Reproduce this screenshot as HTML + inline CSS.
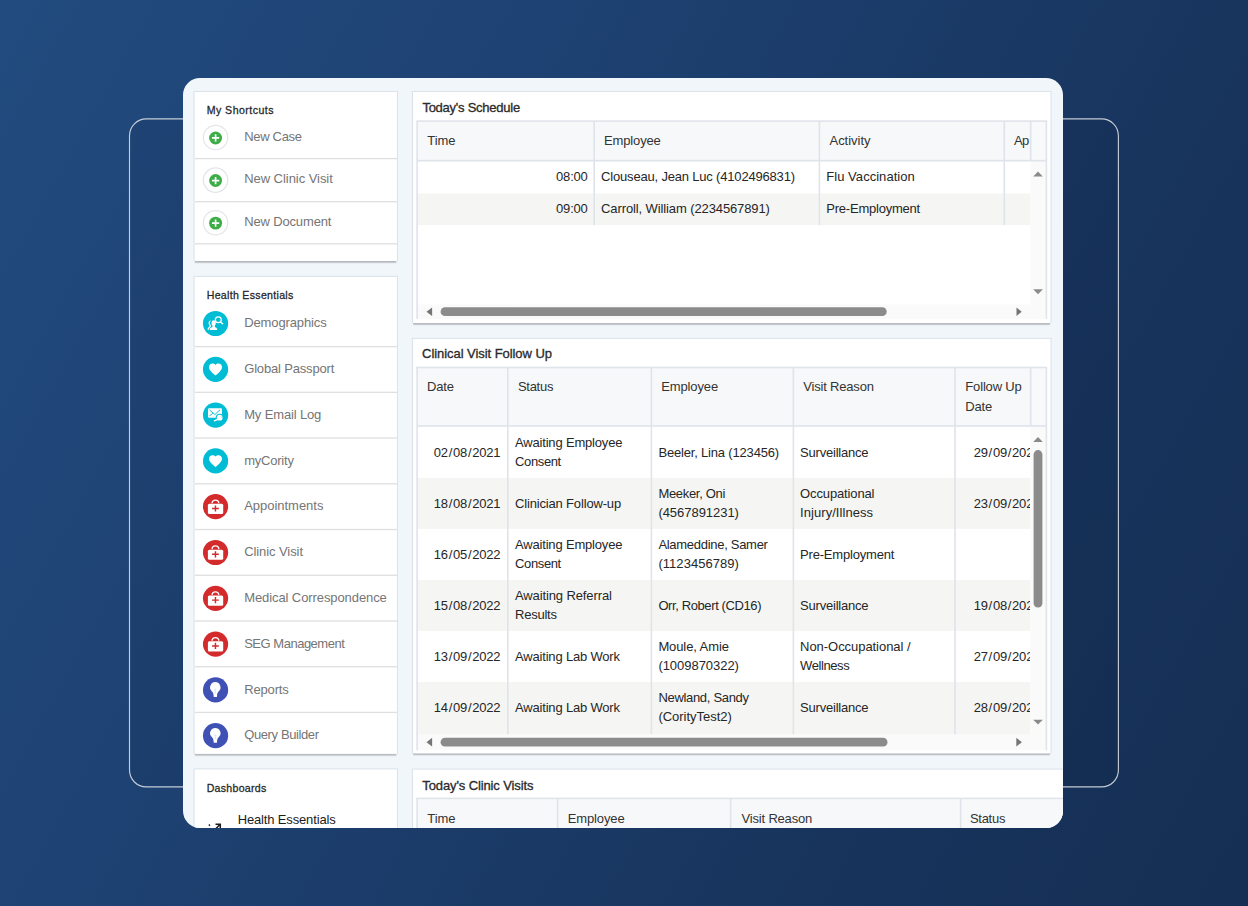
<!DOCTYPE html>
<html lang="en">
<head>
<meta charset="utf-8">
<title>Health Essentials Dashboard</title>
<style>
html,body{margin:0;padding:0}
body{width:1248px;height:906px;overflow:hidden;position:relative;font-family:"Liberation Sans",sans-serif;
 background:linear-gradient(119deg,#224b7f 0%,#1d4070 38%,#18355e 70%,#152e53 100%)}
.outline{position:absolute;left:0;top:0}
.card{position:absolute;left:183px;top:78px;width:880px;height:750px;background:#f1f6fb;border-radius:17px;overflow:hidden}
.x{position:absolute;white-space:pre;line-height:1;font-size:13px;color:#262626}
.h{color:#252525;-webkit-text-stroke:.26px #252525}
.x i{font-style:normal;margin:0 .85px}
.t{color:#2b2b2b;-webkit-text-stroke:.32px #2b2b2b}
.th{color:#333}
.m{color:#757575}
.d{color:#1c1c1c}
.ic{position:absolute;width:28px;height:28px}
.geo{position:absolute;left:0;top:0}
</style>
</head>
<body>
<svg class="outline" width="1248" height="906" viewBox="0 0 1248 906"><rect x="129.5" y="118.9" width="988.9" height="668" rx="16.8" fill="rgba(0,0,24,.06)" stroke="#d3d8e0" stroke-opacity=".92" stroke-width="1.15"/></svg>
<div class="card">

<!-- panels, grids, scrollbars (page coordinates, anti-aliased) -->
<svg class="geo" width="880" height="750" viewBox="183 78 880 750">
<rect x="193.50" y="91.00" width="204.50" height="170.40" fill="rgba(40,60,100,.10)"/>
<rect x="194.80" y="261.00" width="201.50" height="1.80" fill="rgba(0,0,0,.21)"/>
<rect x="194.80" y="262.80" width="201.50" height="0.80" fill="rgba(0,0,0,.05)"/>
<rect x="194.60" y="92.00" width="202.30" height="169.00" fill="#fff"/>
<rect x="193.50" y="275.90" width="204.50" height="478.30" fill="rgba(40,60,100,.10)"/>
<rect x="194.80" y="753.80" width="201.50" height="1.80" fill="rgba(0,0,0,.21)"/>
<rect x="194.80" y="755.60" width="201.50" height="0.80" fill="rgba(0,0,0,.05)"/>
<rect x="194.60" y="276.90" width="202.30" height="476.90" fill="#fff"/>
<rect x="193.50" y="768.40" width="204.50" height="77.00" fill="rgba(40,60,100,.10)"/>
<rect x="194.80" y="845.00" width="201.50" height="1.80" fill="rgba(0,0,0,.21)"/>
<rect x="194.80" y="846.80" width="201.50" height="0.80" fill="rgba(0,0,0,.05)"/>
<rect x="194.60" y="769.40" width="202.30" height="75.60" fill="#fff"/>
<rect x="411.90" y="91.00" width="639.70" height="232.40" fill="rgba(40,60,100,.10)"/>
<rect x="413.20" y="323.00" width="636.70" height="1.80" fill="rgba(0,0,0,.21)"/>
<rect x="413.20" y="324.80" width="636.70" height="0.80" fill="rgba(0,0,0,.05)"/>
<rect x="413.00" y="92.00" width="637.50" height="231.00" fill="#fff"/>
<rect x="411.90" y="337.90" width="639.70" height="415.80" fill="rgba(40,60,100,.10)"/>
<rect x="413.20" y="753.30" width="636.70" height="1.80" fill="rgba(0,0,0,.21)"/>
<rect x="413.20" y="755.10" width="636.70" height="0.80" fill="rgba(0,0,0,.05)"/>
<rect x="413.00" y="338.90" width="637.50" height="414.40" fill="#fff"/>
<rect x="411.90" y="768.60" width="664.20" height="76.80" fill="rgba(40,60,100,.10)"/>
<rect x="413.20" y="845.00" width="661.20" height="1.80" fill="rgba(0,0,0,.21)"/>
<rect x="413.20" y="846.80" width="661.20" height="0.80" fill="rgba(0,0,0,.05)"/>
<rect x="413.00" y="769.60" width="662.00" height="75.40" fill="#fff"/>
<rect x="195.00" y="157.92" width="202.00" height="1.35" fill="#e0e0e0"/>
<rect x="195.00" y="201.02" width="202.00" height="1.35" fill="#e0e0e0"/>
<rect x="195.00" y="243.12" width="202.00" height="1.35" fill="#e0e0e0"/>
<rect x="195.00" y="345.93" width="202.00" height="1.35" fill="#e0e0e0"/>
<rect x="195.00" y="391.66" width="202.00" height="1.35" fill="#e0e0e0"/>
<rect x="195.00" y="437.38" width="202.00" height="1.35" fill="#e0e0e0"/>
<rect x="195.00" y="483.12" width="202.00" height="1.35" fill="#e0e0e0"/>
<rect x="195.00" y="528.85" width="202.00" height="1.35" fill="#e0e0e0"/>
<rect x="195.00" y="574.58" width="202.00" height="1.35" fill="#e0e0e0"/>
<rect x="195.00" y="620.31" width="202.00" height="1.35" fill="#e0e0e0"/>
<rect x="195.00" y="666.04" width="202.00" height="1.35" fill="#e0e0e0"/>
<rect x="195.00" y="711.77" width="202.00" height="1.35" fill="#e0e0e0"/>
<rect x="417.10" y="121.10" width="613.30" height="39.60" fill="#f7f8f9"/>
<rect x="1030.40" y="121.10" width="16.00" height="39.60" fill="#f8f9fa"/>
<rect x="417.10" y="193.40" width="613.30" height="31.70" fill="#f5f5f3"/>
<rect x="1030.40" y="160.70" width="16.00" height="143.80" fill="#fafafa"/>
<rect x="417.10" y="304.50" width="629.30" height="14.40" fill="#fafafa"/>
<rect x="593.40" y="121.10" width="1.60" height="104.00" fill="#dfe3ea"/>
<rect x="818.60" y="121.10" width="1.60" height="104.00" fill="#dfe3ea"/>
<rect x="1003.50" y="121.10" width="1.60" height="104.00" fill="#dfe3ea"/>
<rect x="1029.90" y="121.10" width="1.60" height="39.60" fill="#dfe3ea"/>
<rect x="417.10" y="159.90" width="629.30" height="1.60" fill="#dfe3ea"/>
<rect x="416.30" y="120.30" width="630.90" height="1.60" fill="#dfe3ea"/>
<rect x="416.30" y="121.10" width="1.60" height="197.80" fill="#dfe3ea"/>
<rect x="1045.60" y="121.10" width="1.60" height="197.80" fill="#dfe3ea"/>
<polygon points="1033.20,176.50 1042.80,176.50 1038.00,171.60" fill="#8a8a8a"/>
<polygon points="1033.20,289.30 1042.80,289.30 1038.00,294.20" fill="#8a8a8a"/>
<polygon points="432.10,307.40 432.10,316.00 426.50,311.70" fill="#757575"/>
<polygon points="1016.50,307.40 1016.50,316.00 1021.70,311.70" fill="#757575"/>
<rect x="440.60" y="307.20" width="446.10" height="8.90" rx="4.45" fill="#8b8b8b"/>
<rect x="417.10" y="367.50" width="613.30" height="58.50" fill="#f7f8f9"/>
<rect x="1030.40" y="367.50" width="16.00" height="58.50" fill="#f8f9fa"/>
<rect x="417.10" y="477.85" width="613.30" height="51.05" fill="#f5f5f3"/>
<rect x="417.10" y="579.95" width="613.30" height="51.05" fill="#f5f5f3"/>
<rect x="417.10" y="682.05" width="613.30" height="52.25" fill="#f5f5f3"/>
<rect x="1030.40" y="426.00" width="16.00" height="308.30" fill="#fafafa"/>
<rect x="417.10" y="734.30" width="629.30" height="16.00" fill="#fafafa"/>
<rect x="507.00" y="367.50" width="1.60" height="366.80" fill="#dfe3ea"/>
<rect x="650.60" y="367.50" width="1.60" height="366.80" fill="#dfe3ea"/>
<rect x="792.60" y="367.50" width="1.60" height="366.80" fill="#dfe3ea"/>
<rect x="954.20" y="367.50" width="1.60" height="366.80" fill="#dfe3ea"/>
<rect x="1029.90" y="367.50" width="1.60" height="58.50" fill="#dfe3ea"/>
<rect x="417.10" y="425.20" width="629.30" height="1.60" fill="#dfe3ea"/>
<rect x="416.30" y="366.70" width="630.90" height="1.60" fill="#dfe3ea"/>
<rect x="416.30" y="367.50" width="1.60" height="382.80" fill="#dfe3ea"/>
<rect x="1045.60" y="367.50" width="1.60" height="382.80" fill="#dfe3ea"/>
<polygon points="1033.20,441.90 1042.80,441.90 1038.00,437.00" fill="#8a8a8a"/>
<polygon points="1033.20,719.70 1042.80,719.70 1038.00,724.60" fill="#8a8a8a"/>
<rect x="1033.60" y="450.10" width="8.80" height="157.50" rx="4.4" fill="#8b8b8b"/>
<polygon points="432.10,737.80 432.10,746.60 426.50,742.20" fill="#757575"/>
<polygon points="1016.30,737.80 1016.30,746.60 1021.90,742.20" fill="#757575"/>
<rect x="440.60" y="737.80" width="446.90" height="8.80" rx="4.4" fill="#8b8b8b"/>
<rect x="417.10" y="798.40" width="652.90" height="41.60" fill="#f7f8f9"/>
<rect x="556.80" y="798.40" width="1.60" height="41.60" fill="#dfe3ea"/>
<rect x="729.80" y="798.40" width="1.60" height="41.60" fill="#dfe3ea"/>
<rect x="959.80" y="798.40" width="1.60" height="41.60" fill="#dfe3ea"/>
<rect x="416.30" y="797.60" width="653.70" height="1.60" fill="#dfe3ea"/>
<rect x="416.30" y="798.40" width="1.60" height="41.60" fill="#dfe3ea"/>
</svg>
<!-- follow-up dates: clipped by the column edge -->
<div style="position:absolute;left:772px;top:349px;width:75.4px;height:307px;overflow:hidden">
<span class="x c" style="left:18.70px;top:19.0px;letter-spacing:-0.193px;">29<i>/</i>09<i>/</i>2022</span>
<span class="x c" style="left:18.70px;top:70.0px;letter-spacing:-0.193px;">23<i>/</i>09<i>/</i>2022</span>
<span class="x c" style="left:18.70px;top:172.0px;letter-spacing:-0.193px;">19<i>/</i>08<i>/</i>2022</span>
<span class="x c" style="left:18.70px;top:223.0px;letter-spacing:-0.193px;">27<i>/</i>09<i>/</i>2022</span>
<span class="x c" style="left:18.70px;top:274.0px;letter-spacing:-0.193px;">28<i>/</i>09<i>/</i>2022</span>
</div>

<!-- icons -->
<svg class="ic" style="left:18px;top:45px" width="28" height="28" viewBox="-14.55 -14.50 28 28"><circle r="12.2" fill="#fff" stroke="#e3e5e9" stroke-width="1.25"/><circle cx="0.05" cy="0.45" r="6.45" fill="#3dad48"/><path d="M-3.6 .45H3.7M.05 -3.2V4.1" stroke="#fff" stroke-width="1.7" fill="none"/></svg>
<svg class="ic" style="left:18px;top:88px" width="28" height="28" viewBox="-14.55 -14.10 28 28"><circle r="12.2" fill="#fff" stroke="#e3e5e9" stroke-width="1.25"/><circle cx="0.05" cy="0.45" r="6.45" fill="#3dad48"/><path d="M-3.6 .45H3.7M.05 -3.2V4.1" stroke="#fff" stroke-width="1.7" fill="none"/></svg>
<svg class="ic" style="left:18px;top:130px" width="28" height="28" viewBox="-14.55 -14.70 28 28"><circle r="12.2" fill="#fff" stroke="#e3e5e9" stroke-width="1.25"/><circle cx="0.05" cy="0.45" r="6.45" fill="#3dad48"/><path d="M-3.6 .45H3.7M.05 -3.2V4.1" stroke="#fff" stroke-width="1.7" fill="none"/></svg>
<svg class="ic" style="left:18px;top:231px" width="28" height="28" viewBox="-14.55 -14.50 28 28"><circle r="12.6" fill="#00bcd4"/><circle cx="2.75" cy="-3.75" r="2.95" fill="none" stroke="#fff" stroke-width="1.25"/><path d="M4.95 -1.55L7.1 .35" stroke="#fff" stroke-width="1.4" stroke-linecap="round"/><path d="M-5.3 -2.9C-7.5 -2.4 -7.3 .8 -5.9 2C-6.1 3.4 -7.7 3.7 -8.1 6L-6.9 6.4C-6.6 4.7 -5.1 4.3 -4.6 2.8L-4.8 1.6C-5.9 .4 -6 -1.6 -4.8 -2.8Z" fill="#fff"/><ellipse cx="-1.9" cy="-.55" rx="2.15" ry="2.75" fill="#fff"/><path d="M-5.8 6.45C-5.8 4.6 -4.6 4.1 -3.1 3.5V1.4H-.7V3.5C.8 4.1 1.75 4.6 1.75 6.45Z" fill="#fff"/></svg>
<svg class="ic" style="left:18px;top:277px" width="28" height="28" viewBox="-14.55 -14.30 28 28"><circle r="12.6" fill="#00bcd4"/><path transform="translate(-.05 .25) scale(.655) translate(-12 -12.175)" fill="#fff" d="M12 21.35l-1.45-1.32C5.4 15.36 2 12.28 2 8.5 2 5.42 4.42 3 7.5 3c1.74 0 3.41.81 4.5 2.09C13.09 3.81 14.76 3 16.5 3 19.58 3 22 5.42 22 8.5c0 3.78-3.4 6.86-8.55 11.54L12 21.35z"/></svg>
<svg class="ic" style="left:18px;top:323px" width="28" height="28" viewBox="-14.55 -14.10 28 28"><circle r="12.6" fill="#00bcd4"/><rect x="-7.5" y="-6.9" width="13.9" height="9.5" rx="1" fill="#fff"/><path d="M-5.8 -5L-.6 -.6L4.2 -5M-5.8 .5L-2.8 -1.7" stroke="#00bcd4" stroke-width=".9" fill="none" stroke-linecap="round"/><circle cx="4.1" cy="2.6" r="3.9" fill="#00bcd4"/><path d="M2.2 4.4L-1.4 6.2" stroke="#00bcd4" stroke-width="2.6" stroke-linecap="round"/><circle cx="4.1" cy="2.6" r="2.9" fill="#fff"/><path d="M2.2 4.2L-1.2 5.7" stroke="#fff" stroke-width="1.3" stroke-linecap="round"/><path d="M5.4 1.1A1.9 1.9 0 0 1 6 2.8" stroke="#00bcd4" stroke-width=".5" fill="none" opacity=".6"/></svg>
<svg class="ic" style="left:18px;top:368px" width="28" height="28" viewBox="-14.55 -14.90 28 28"><circle r="12.6" fill="#00bcd4"/><path transform="translate(-.05 .25) scale(.655) translate(-12 -12.175)" fill="#fff" d="M12 21.35l-1.45-1.32C5.4 15.36 2 12.28 2 8.5 2 5.42 4.42 3 7.5 3c1.74 0 3.41.81 4.5 2.09C13.09 3.81 14.76 3 16.5 3 19.58 3 22 5.42 22 8.5c0 3.78-3.4 6.86-8.55 11.54L12 21.35z"/></svg>
<svg class="ic" style="left:18px;top:414px" width="28" height="28" viewBox="-14.55 -14.70 28 28"><circle r="12.6" fill="#d32a2c"/><path d="M-3.5 -3.4C-3.3 -7.6 3.1 -7.6 3.3 -3.4" stroke="#fff" stroke-width="1.25" fill="none"/><rect x="-7.65" y="-2.85" width="15.3" height="10.2" rx="1.5" fill="#fff"/><path d="M-3.5 1.8H3.3M-.1 -1.3V4.9" stroke="#d32a2c" stroke-width="1.45" fill="none"/></svg>
<svg class="ic" style="left:18px;top:460px" width="28" height="28" viewBox="-14.55 -14.50 28 28"><circle r="12.6" fill="#d32a2c"/><path d="M-3.5 -3.4C-3.3 -7.6 3.1 -7.6 3.3 -3.4" stroke="#fff" stroke-width="1.25" fill="none"/><rect x="-7.65" y="-2.85" width="15.3" height="10.2" rx="1.5" fill="#fff"/><path d="M-3.5 1.8H3.3M-.1 -1.3V4.9" stroke="#d32a2c" stroke-width="1.45" fill="none"/></svg>
<svg class="ic" style="left:18px;top:506px" width="28" height="28" viewBox="-14.55 -14.30 28 28"><circle r="12.6" fill="#d32a2c"/><path d="M-3.5 -3.4C-3.3 -7.6 3.1 -7.6 3.3 -3.4" stroke="#fff" stroke-width="1.25" fill="none"/><rect x="-7.65" y="-2.85" width="15.3" height="10.2" rx="1.5" fill="#fff"/><path d="M-3.5 1.8H3.3M-.1 -1.3V4.9" stroke="#d32a2c" stroke-width="1.45" fill="none"/></svg>
<svg class="ic" style="left:18px;top:552px" width="28" height="28" viewBox="-14.55 -14.10 28 28"><circle r="12.6" fill="#d32a2c"/><path d="M-3.5 -3.4C-3.3 -7.6 3.1 -7.6 3.3 -3.4" stroke="#fff" stroke-width="1.25" fill="none"/><rect x="-7.65" y="-2.85" width="15.3" height="10.2" rx="1.5" fill="#fff"/><path d="M-3.5 1.8H3.3M-.1 -1.3V4.9" stroke="#d32a2c" stroke-width="1.45" fill="none"/></svg>
<svg class="ic" style="left:18px;top:597px" width="28" height="28" viewBox="-14.55 -14.90 28 28"><circle r="12.6" fill="#3f51b5"/><path d="M-.25 -7.8A5.2 5.2 0 0 0 -4.2 .8C-2.9 2.4 -2 3.4 -1.95 5.2V6.6C-1.95 6.9 -1.75 7.05 -1.5 7.05H1.1C1.35 7.05 1.5 6.9 1.5 6.6V5.2C1.55 3.4 2.4 2.4 3.7 .8A5.2 5.2 0 0 0 -.25 -7.8Z" fill="#fff"/><path d="M-1 .4C-1.2 -1.2 .8 -1.2 .6 .4M-.2 .6V3.6" stroke="#9ec9ee" stroke-width=".55" fill="none" opacity=".8"/></svg>
<svg class="ic" style="left:18px;top:643px" width="28" height="28" viewBox="-14.55 -14.70 28 28"><circle r="12.6" fill="#3f51b5"/><path d="M-.25 -7.8A5.2 5.2 0 0 0 -4.2 .8C-2.9 2.4 -2 3.4 -1.95 5.2V6.6C-1.95 6.9 -1.75 7.05 -1.5 7.05H1.1C1.35 7.05 1.5 6.9 1.5 6.6V5.2C1.55 3.4 2.4 2.4 3.7 .8A5.2 5.2 0 0 0 -.25 -7.8Z" fill="#fff"/><path d="M-1 .4C-1.2 -1.2 .8 -1.2 .6 .4M-.2 .6V3.6" stroke="#9ec9ee" stroke-width=".55" fill="none" opacity=".8"/></svg>
<svg class="ic" style="left:19px;top:738px" width="28" height="28" viewBox="-14.30 -14.00 28 28"><path d="M-7.4 -4.4L-6.4 -5.4M-3 1.2L3.4 -5.2M-0.8 -5.8H4V-1" stroke="#1c1c1c" stroke-width="1.5" fill="none"/></svg>

<!-- text -->
<span class="x h" style="left:23.70px;top:27.0px;font-size:10.6px;letter-spacing:0.453px;">My Shortcuts</span>
<span class="x m" style="left:61.20px;top:52.0px;letter-spacing:-0.305px;">New Case</span>
<span class="x m" style="left:61.20px;top:94.0px;letter-spacing:-0.048px;">New Clinic Visit</span>
<span class="x m" style="left:61.20px;top:137.0px;letter-spacing:-0.150px;">New Document</span>
<span class="x h" style="left:23.70px;top:212.0px;font-size:10.6px;letter-spacing:0.297px;">Health Essentials</span>
<span class="x m" style="left:61.20px;top:238.0px;letter-spacing:-0.119px;">Demographics</span>
<span class="x m" style="left:61.20px;top:284.0px;letter-spacing:-0.170px;">Global Passport</span>
<span class="x m" style="left:61.20px;top:330.0px;letter-spacing:-0.147px;">My Email Log</span>
<span class="x m" style="left:61.20px;top:376.0px;letter-spacing:-0.225px;">myCority</span>
<span class="x m" style="left:61.20px;top:421.0px;letter-spacing:-0.027px;">Appointments</span>
<span class="x m" style="left:61.20px;top:467.0px;letter-spacing:-0.082px;">Clinic Visit</span>
<span class="x m" style="left:61.20px;top:513.0px;letter-spacing:-0.090px;">Medical Correspondence</span>
<span class="x m" style="left:61.20px;top:559.0px;letter-spacing:-0.487px;">SEG Management</span>
<span class="x m" style="left:61.20px;top:605.0px;letter-spacing:-0.153px;">Reports</span>
<span class="x m" style="left:61.20px;top:650.0px;letter-spacing:-0.387px;">Query Builder</span>
<span class="x h" style="left:23.70px;top:705.0px;font-size:10.6px;letter-spacing:0.264px;">Dashboards</span>
<span class="x d" style="left:54.70px;top:735.0px;letter-spacing:-0.152px;">Health Essentials</span>
<span class="x t" style="left:239.40px;top:23.0px;letter-spacing:-0.251px;">Today&#x27;s Schedule</span>
<span class="x th" style="left:244.30px;top:56.0px;letter-spacing:-0.059px;">Time</span>
<span class="x th" style="left:421.00px;top:56.0px;letter-spacing:-0.140px;">Employee</span>
<span class="x th" style="left:646.50px;top:56.0px;letter-spacing:-0.024px;">Activity</span>
<span class="x th" style="left:831.00px;top:56.0px;letter-spacing:-0.671px;">Ap</span>
<span class="x c" style="left:104.7px;width:300px;text-align:right;top:92.0px;letter-spacing:-0.175px;">08:00</span>
<span class="x c" style="left:418.10px;top:92.0px;letter-spacing:-0.185px;">Clouseau, Jean Luc (4102496831)</span>
<span class="x c" style="left:643.30px;top:92.0px;letter-spacing:0.037px;">Flu Vaccination</span>
<span class="x c" style="left:104.7px;width:300px;text-align:right;top:124.0px;letter-spacing:-0.175px;">09:00</span>
<span class="x c" style="left:418.10px;top:124.0px;letter-spacing:-0.112px;">Carroll, William (2234567891)</span>
<span class="x c" style="left:643.30px;top:124.0px;letter-spacing:-0.230px;">Pre-Employment</span>
<span class="x t" style="left:239.10px;top:269.0px;letter-spacing:-0.061px;">Clinical Visit Follow Up</span>
<span class="x th" style="left:244.10px;top:302.0px;letter-spacing:-0.210px;">Date</span>
<span class="x th" style="left:334.90px;top:302.0px;letter-spacing:-0.271px;">Status</span>
<span class="x th" style="left:478.30px;top:302.0px;letter-spacing:-0.140px;">Employee</span>
<span class="x th" style="left:620.30px;top:302.0px;letter-spacing:-0.192px;">Visit Reason</span>
<span class="x th" style="left:782.30px;top:302.0px;letter-spacing:-0.158px;">Follow Up</span>
<span class="x th" style="left:782.30px;top:322.0px;letter-spacing:-0.210px;">Date</span>
<span class="x c" style="left:17.3px;width:300px;text-align:right;top:368.0px;letter-spacing:-0.193px;">02<i>/</i>08<i>/</i>2021</span>
<span class="x c" style="left:332.00px;top:358.0px;letter-spacing:-0.181px;">Awaiting Employee</span>
<span class="x c" style="left:332.00px;top:377.0px;letter-spacing:-0.368px;">Consent</span>
<span class="x c" style="left:475.40px;top:368.0px;letter-spacing:-0.179px;">Beeler, Lina (123456)</span>
<span class="x c" style="left:617.10px;top:368.0px;letter-spacing:-0.217px;">Surveillance</span>
<span class="x c" style="left:17.3px;width:300px;text-align:right;top:419.0px;letter-spacing:-0.193px;">18<i>/</i>08<i>/</i>2021</span>
<span class="x c" style="left:332.00px;top:419.0px;letter-spacing:-0.165px;">Clinician Follow-up</span>
<span class="x c" style="left:475.40px;top:409.0px;letter-spacing:-0.310px;">Meeker, Oni</span>
<span class="x c" style="left:475.40px;top:428.0px;letter-spacing:-0.039px;">(4567891231)</span>
<span class="x c" style="left:617.10px;top:409.0px;letter-spacing:-0.136px;">Occupational</span>
<span class="x c" style="left:617.10px;top:428.0px;letter-spacing:0.050px;">Injury/Illness</span>
<span class="x c" style="left:17.3px;width:300px;text-align:right;top:470.0px;letter-spacing:-0.193px;">16<i>/</i>05<i>/</i>2022</span>
<span class="x c" style="left:332.00px;top:460.0px;letter-spacing:-0.181px;">Awaiting Employee</span>
<span class="x c" style="left:332.00px;top:479.0px;letter-spacing:-0.368px;">Consent</span>
<span class="x c" style="left:475.40px;top:460.0px;letter-spacing:-0.290px;">Alameddine, Samer</span>
<span class="x c" style="left:475.40px;top:479.0px;letter-spacing:0.049px;">(1123456789)</span>
<span class="x c" style="left:617.10px;top:470.0px;letter-spacing:-0.200px;">Pre-Employment</span>
<span class="x c" style="left:17.3px;width:300px;text-align:right;top:521.0px;letter-spacing:-0.193px;">15<i>/</i>08<i>/</i>2022</span>
<span class="x c" style="left:332.00px;top:511.0px;letter-spacing:-0.116px;">Awaiting Referral</span>
<span class="x c" style="left:332.00px;top:530.0px;letter-spacing:-0.225px;">Results</span>
<span class="x c" style="left:475.40px;top:521.0px;letter-spacing:-0.393px;">Orr, Robert (CD16)</span>
<span class="x c" style="left:617.10px;top:521.0px;letter-spacing:-0.217px;">Surveillance</span>
<span class="x c" style="left:17.3px;width:300px;text-align:right;top:572.0px;letter-spacing:-0.193px;">13<i>/</i>09<i>/</i>2022</span>
<span class="x c" style="left:332.00px;top:572.0px;letter-spacing:-0.182px;">Awaiting Lab Work</span>
<span class="x c" style="left:475.40px;top:562.0px;letter-spacing:-0.102px;">Moule, Amie</span>
<span class="x c" style="left:475.40px;top:581.0px;letter-spacing:-0.039px;">(1009870322)</span>
<span class="x c" style="left:617.10px;top:562.0px;letter-spacing:-0.051px;">Non-Occupational /</span>
<span class="x c" style="left:617.10px;top:581.0px;letter-spacing:-0.414px;">Wellness</span>
<span class="x c" style="left:17.3px;width:300px;text-align:right;top:623.0px;letter-spacing:-0.193px;">14<i>/</i>09<i>/</i>2022</span>
<span class="x c" style="left:332.00px;top:623.0px;letter-spacing:-0.182px;">Awaiting Lab Work</span>
<span class="x c" style="left:475.40px;top:613.0px;letter-spacing:-0.313px;">Newland, Sandy</span>
<span class="x c" style="left:475.40px;top:632.0px;letter-spacing:-0.021px;">(CorityTest2)</span>
<span class="x c" style="left:617.10px;top:623.0px;letter-spacing:-0.217px;">Surveillance</span>
<span class="x t" style="left:239.30px;top:701.0px;letter-spacing:-0.115px;">Today&#x27;s Clinic Visits</span>
<span class="x th" style="left:244.30px;top:734.0px;letter-spacing:-0.059px;">Time</span>
<span class="x th" style="left:384.80px;top:734.0px;letter-spacing:-0.140px;">Employee</span>
<span class="x th" style="left:558.60px;top:734.0px;letter-spacing:-0.192px;">Visit Reason</span>
<span class="x th" style="left:786.90px;top:734.0px;letter-spacing:-0.271px;">Status</span>
</div>
</body>
</html>
